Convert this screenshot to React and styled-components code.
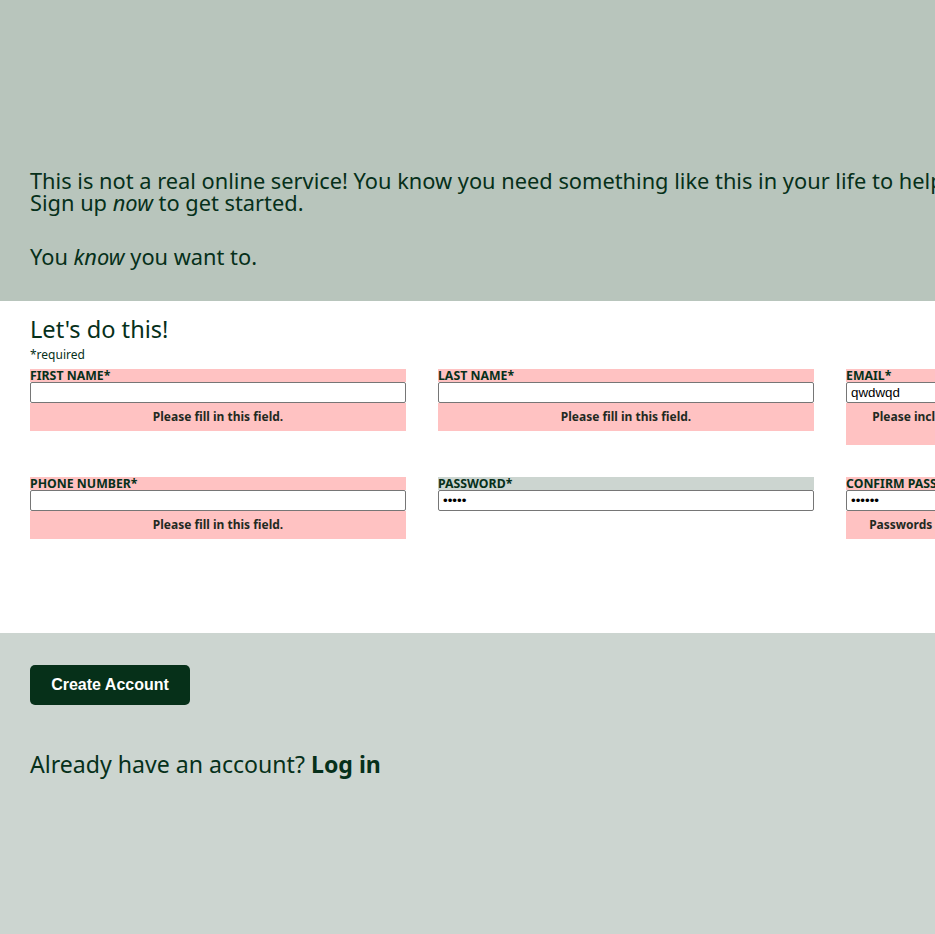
import React from 'react'
import styled, { createGlobalStyle } from 'styled-components'

const GlobalStyle = createGlobalStyle`
body{
margin:0;
font-family: 'Noto Sans', 'Open Sans', sans-serif;
color:#06301a;
background:#ccd5d0;
}
`

const Page = styled.div`
width:100%;
overflow:hidden;
`

const Wide = styled.div`
width:1300px;
`

const Intro = styled.section`
height:301px;
box-sizing:border-box;
background-color:#b8c5bc;
padding:0 30px 33px;
display:flex;
flex-direction:column;
justify-content:flex-end;
gap:31px;
`

const IntroText = styled.p`
margin:0;
font-size:21.8px;
line-height:22.5px;
white-space:nowrap;
`

const FormArea = styled.section`
background:#fff;
height:332px;
box-sizing:border-box;
padding:14px 30px 0;
`

const Heading = styled.h2`
margin:0;
font-size:23.6px;
line-height:28px;
font-weight:400;
`

const Required = styled.div`
font-size:12px;
line-height:14px;
margin:5px 0 7px;
`

const Grid = styled.div`
display:grid;
grid-template-columns:repeat(3, 376px);
column-gap:32px;
row-gap:32px;
align-items:start;
`

const Field = styled.div`
display:flex;
flex-direction:column;
`

const Label = styled.label`
display:block;
font-size:12.3px;
line-height:13px;
font-weight:700;
text-transform:uppercase;
background-color:${props => props.$invalid ? '#ffc2c2' : '#ccd5d0'};
`

const Input = styled.input`
box-sizing:border-box;
width:100%;
height:21px;
margin:0;
padding:1px 4px;
border:1px solid #767676;
border-radius:2px;
font-family:'Liberation Sans', Arial, sans-serif;
font-size:13.33px;
color:#000;
background:#fff;
`

const ErrorMsg = styled.div`
background:#ffc2c2;
padding:7px 14px;
font-size:12px;
line-height:14px;
font-weight:700;
text-align:center;
color:#1f2a22;
`

const Actions = styled.section`
background:#ccd5d0;
min-height:301px;
padding:32px 30px;
box-sizing:border-box;
`

const Button = styled.button`
width:160px;
height:40px;
border:none;
border-radius:5px;
background:#063019;
color:#fff;
font-family:'Liberation Sans', Arial, sans-serif;
font-size:16px;
font-weight:700;
cursor:pointer;
`

const LoginLine = styled.p`
margin:46px 0 0;
font-size:23.1px;
line-height:26px;
`

const LoginLink = styled.a`
color:inherit;
font-weight:700;
text-decoration:none;
`

const fields = [
    { id: 'first', label: 'First Name*', type: 'text', value: '', error: 'Please fill in this field.' },
    { id: 'last', label: 'Last Name*', type: 'text', value: '', error: 'Please fill in this field.' },
    { id: 'email', label: 'Email*', type: 'email', value: 'qwdwqd', error: "Please include an '@' in the email address. 'qwdwqd' is missing an '@'." },
    { id: 'phone', label: 'Phone Number*', type: 'tel', value: '', error: 'Please fill in this field.' },
    { id: 'password', label: 'Password*', type: 'password', value: 'aaaaa', error: null },
    { id: 'confirm', label: 'Confirm Password*', type: 'password', value: 'aaaaaa', error: 'Passwords must match. Please re-enter your password.' },
]

const App = () => {
    return (
        <Page>
            <GlobalStyle />
            <Wide>
                <Intro>
                    <IntroText>
                        This is not a real online service! You know you need something like this in your life to help you realize your deepest dreams.<br />
                        Sign up <em>now</em> to get started.
                    </IntroText>
                    <IntroText>You <em>know</em> you want to.</IntroText>
                </Intro>
                <FormArea>
                    <Heading>Let's do this!</Heading>
                    <Required>*required</Required>
                    <Grid>
                        {fields.map(f => (
                            <Field key={f.id}>
                                <Label htmlFor={f.id} $invalid={!!f.error}>{f.label}</Label>
                                <Input id={f.id} type={f.type} defaultValue={f.value} readOnly />
                                {f.error && <ErrorMsg>{f.error}</ErrorMsg>}
                            </Field>
                        ))}
                    </Grid>
                </FormArea>
                <Actions>
                    <Button>Create Account</Button>
                    <LoginLine>Already have an account? <LoginLink href="#">Log in</LoginLink></LoginLine>
                </Actions>
            </Wide>
        </Page>
    )
}

export default App
